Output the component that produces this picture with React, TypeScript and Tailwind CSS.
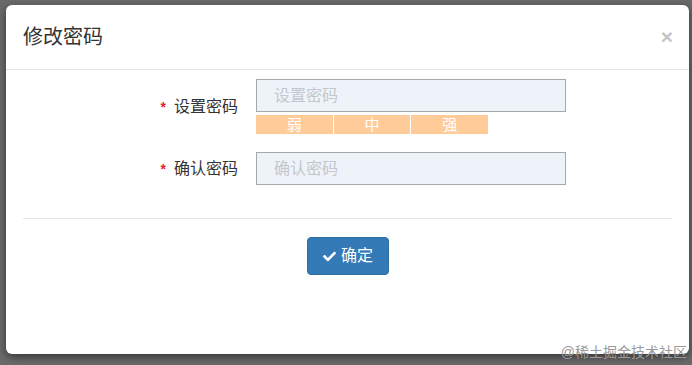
import { FaCheck } from 'react-icons/fa'

const FONT = { fontFamily: '"Helvetica Neue", Arial, "Noto Sans CJK SC", sans-serif' }

function Field({ label, placeholder, children }: { label: string; placeholder: string; children?: React.ReactNode }) {
  return (
    <div className="flex items-center">
      <div className="w-[215px] flex justify-end items-center text-[16px] text-[#333]">
        <span className="text-[#e4262a] font-bold text-[14px] mr-[8px] leading-none">*</span>
        <span>{label}</span>
      </div>
      <div className="ml-[18px] flex flex-col">
        <div className="w-[310px] h-[33px] bg-[#eef3f9] border border-[#a8a8a8] flex items-center pl-[17px] text-[16px] text-[#c3c7cc]">
          {placeholder}
        </div>
        {children}
      </div>
    </div>
  )
}

export default function App() {
  return (
    <div className="relative w-[692px] h-[365px] bg-[#6a6a6a] pt-[5px] pl-[6px] overflow-hidden" style={FONT}>
      <div className="w-[683px] h-[349px] bg-white rounded-[6px] shadow-[0_3px_9px_rgba(0,0,0,0.5)] flex flex-col">
        {/* header */}
        <div className="h-[65px] flex items-center justify-between pl-[17px] pr-[16px] border-b border-[#e5e5e5]">
          <span className="text-[20px] text-[#333]">修改密码</span>
          <span className="text-[21px] font-bold text-[#c4c4c4] leading-none -mt-[2px]">×</span>
        </div>

        {/* body */}
        <div className="px-[17px] pt-[9px] flex flex-col">
          <Field label="设置密码" placeholder="设置密码">
            <div className="flex mt-[3px] h-[19px] w-[232px] gap-px text-[15px] text-white leading-[19px]">
              <div className="flex-1 bg-[#ffcb98] text-center">弱</div>
              <div className="flex-1 bg-[#ffcb98] text-center">中</div>
              <div className="flex-1 bg-[#ffcb98] text-center">强</div>
            </div>
          </Field>
          <div className="mt-[18px]">
            <Field label="确认密码" placeholder="确认密码" />
          </div>
          <div className="mt-[33px] border-t border-[#e5e5e5]" />
          <div className="flex justify-center mt-[18px]">
            <button className="w-[82px] h-[38px] rounded-[4px] bg-[#337ab7] border border-[#2e6da4] text-white text-[16px] flex items-center justify-center gap-[4px]">
              <FaCheck className="w-[15px] h-[13px]" />
              <span>确定</span>
            </button>
          </div>
        </div>
      </div>

      <span className="absolute right-[5px] bottom-[6px] text-[14px] text-[#9a9a9a] leading-none">@稀土掘金技术社区</span>
    </div>
  )
}
